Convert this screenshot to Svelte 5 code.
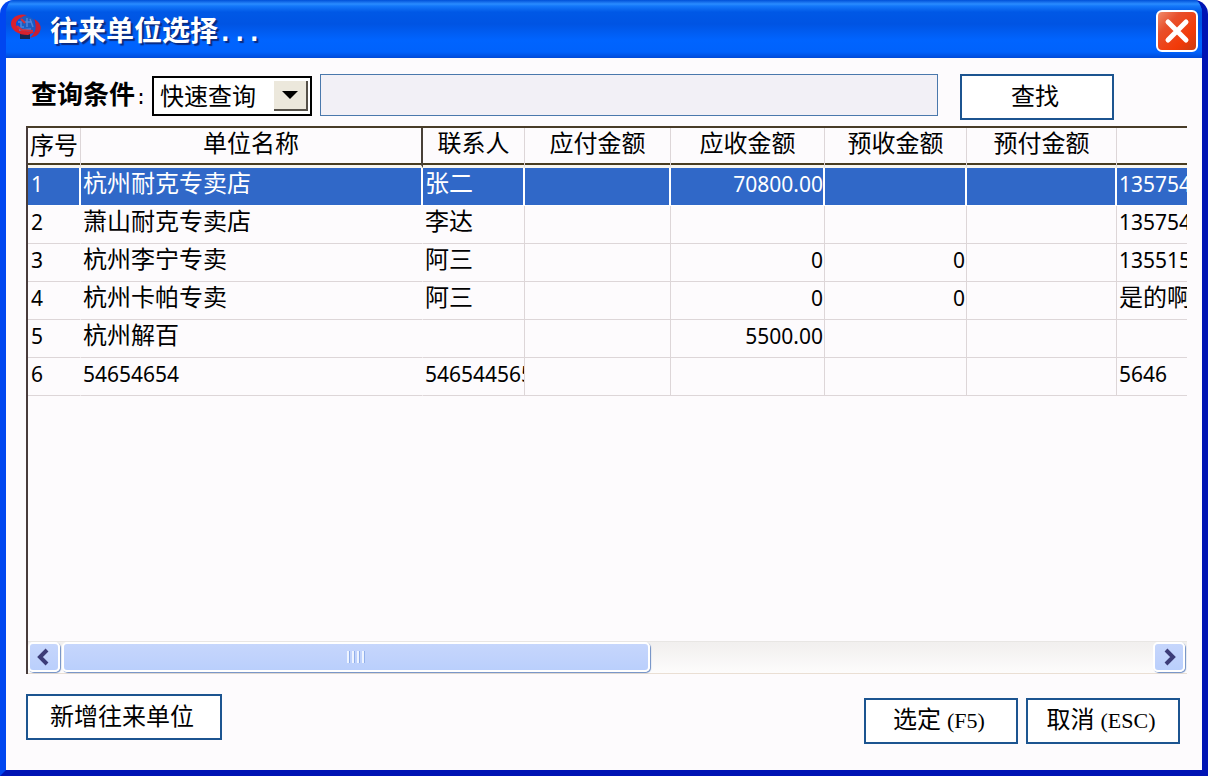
<script lang="ts">
  interface Unit {
    name: string;
    contact: string;
    payable: string;
    receivable: string;
    preReceived: string;
    prePaid: string;
    phone: string;
  }

  const units: Unit[] = [
    { name: '杭州耐克专卖店', contact: '张二', payable: '', receivable: '70800.00', preReceived: '', prePaid: '', phone: '135754' },
    { name: '萧山耐克专卖店', contact: '李达', payable: '', receivable: '', preReceived: '', prePaid: '', phone: '135754' },
    { name: '杭州李宁专卖', contact: '阿三', payable: '', receivable: '0', preReceived: '0', prePaid: '', phone: '135515' },
    { name: '杭州卡帕专卖', contact: '阿三', payable: '', receivable: '0', preReceived: '0', prePaid: '', phone: '是的啊' },
    { name: '杭州解百', contact: '', payable: '', receivable: '5500.00', preReceived: '', prePaid: '', phone: '' },
    { name: '54654654', contact: '546544565', payable: '', receivable: '', preReceived: '', prePaid: '', phone: '5646' }
  ];

  let selected = $state(0);
  let keyword = $state('');

  const isLatin = (text: string) => /^[\d.]+$/.test(text);
</script>

{#snippet cell(text: string, amount: boolean)}
  <td class:amount class:latin={isLatin(text)}>{text}</td>
{/snippet}

<div class="window">
  <header class="titlebar">
    <svg class="logo" width="32" height="28" viewBox="0 0 32 28" fill="none" aria-hidden="true">
      <path d="M10 20h10v6H10z" fill="#17264f" />
      <path d="M10 5c4-3 12-2 14 3l1 8c-3 4-10 4-14 1z" fill="#1c5cc0" />
      <path d="M17 2C9 0 1 4 1 11c0 6 7 11 17 11l7-3C14 19 6 16 6 11c0-4 5-7 11-9z" fill="#d9202c" />
      <path d="M24 6c8 4 9 12 2 17l-6 2c6-6 7-11 4-19z" fill="#c81e32" />
      <path d="M8 9h3v5h3M17 5v9M20 6l3 8M14 9h8M9 17l12-1" stroke="#4a84e0" stroke-width="1.5" />
      <path d="M7 13l5 4 11 1M11 6l4 4" stroke="#d2303c" stroke-width="2" />
    </svg>
    <h1>往来单位选择<span class="dots">...</span></h1>
    <button class="close" aria-label="关闭">
      <svg width="26" height="26" viewBox="0 0 26 26" fill="none">
        <path d="M4 4l18 18M22 4L4 22" stroke="#fff" stroke-width="5" stroke-linecap="round" />
      </svg>
    </button>
  </header>

  <main>
    <form class="query" onsubmit={(e) => e.preventDefault()}>
      <label for="mode">查询条件<span class="colon">:</span></label>
      <div class="select">
        <select id="mode">
          <option>快速查询</option>
        </select>
        <span class="arrow">
          <svg width="16" height="8" viewBox="0 0 16 8"><path d="M0 0h16L8 8z" fill="#000" /></svg>
        </span>
      </div>
      <input type="text" aria-label="查询内容" bind:value={keyword} />
      <button class="btn">查找</button>
    </form>

    <div class="grid">
      <div class="view">
        <table>
          <colgroup>
            <col class="c-no" />
            <col class="c-name" />
            <col class="c-contact" />
            <col class="c-payable" />
            <col class="c-receivable" />
            <col class="c-received" />
            <col class="c-paid" />
            <col />
          </colgroup>
          <thead>
            <tr>
              <th class="first">序号</th>
              <th class="name">单位名称</th>
              <th>联系人</th>
              <th>应付金额</th>
              <th>应收金额</th>
              <th>预收金额</th>
              <th>预付金额</th>
              <th></th>
            </tr>
          </thead>
          <tbody>
            {#each units as unit, i}
              <tr class:selected={i === selected} onclick={() => (selected = i)}>
                {@render cell(String(i + 1), false)}
                {@render cell(unit.name, false)}
                {@render cell(unit.contact, false)}
                {@render cell(unit.payable, true)}
                {@render cell(unit.receivable, true)}
                {@render cell(unit.preReceived, true)}
                {@render cell(unit.prePaid, true)}
                {@render cell(unit.phone, false)}
              </tr>
            {/each}
          </tbody>
        </table>
      </div>

      <div class="scrollbar">
        <button class="scroll-btn" aria-label="向左滚动">
          <svg width="14" height="18" viewBox="0 0 14 18" fill="none"><path d="M10 2L3 9l7 7" stroke="#3c3c78" stroke-width="4" /></svg>
        </button>
        <div class="track">
          <div class="thumb"><i></i><i></i><i></i><i></i></div>
        </div>
        <button class="scroll-btn" aria-label="向右滚动">
          <svg width="14" height="18" viewBox="0 0 14 18" fill="none"><path d="M4 2l7 7-7 7" stroke="#3c3c78" stroke-width="4" /></svg>
        </button>
      </div>
    </div>

    <footer>
      <button class="btn add">新增往来单位</button>
      <div class="actions">
        <button class="btn">选定<span class="key">(F5)</span></button>
        <button class="btn">取消<span class="key">(ESC)</span></button>
      </div>
    </footer>
  </main>
</div>

<style>
  :global(body) {
    margin: 0;
    background: #fff;
  }

  .window {
    box-sizing: border-box;
    min-height: 100vh;
    display: flex;
    flex-direction: column;
    border: solid;
    border-width: 0 6px 6px;
    border-color: #0014b4 #0014b4 #0014b4 #0046f0;
    border-radius: 14px 14px 0 0;
    background: #0058ee;
    color: #000;
    font-family: "Noto Sans CJK SC", sans-serif;
    font-size: 24px;
    line-height: 36px;
    overflow: hidden;
  }

  button,
  input,
  select {
    box-sizing: border-box;
    margin: 0;
    padding: 0;
    font: inherit;
    color: inherit;
  }

  .titlebar {
    box-sizing: border-box;
    height: 58px;
    display: flex;
    align-items: center;
    gap: 8px;
    padding: 4px 4px 0;
    background: linear-gradient(#0050d8 0, #2a8cff 4px, #1478fa 6px, #0058e6 12px, #0054e3 24px, #0064ff 40px, #0062fc 52px, #004ad8 58px);
  }

  .logo {
    margin-top: -8px;
  }

  h1 {
    flex: 1;
    margin: 0;
    color: #fff;
    font-size: 28px;
    font-weight: 700;
    line-height: 40px;
    text-shadow: 2px 2px 1px #0a2a80;
  }

  .dots {
    font-family: "DejaVu Sans Mono", monospace;
    font-size: 24px;
  }

  .close {
    width: 42px;
    height: 42px;
    display: flex;
    align-items: center;
    justify-content: center;
    border: 2px solid #fff;
    border-radius: 6px;
    background: linear-gradient(135deg, #f08c6c 0, #e8502c 30%, #f23a08 70%, #c83c14 100%);
  }

  main {
    flex: 1;
    display: flex;
    flex-direction: column;
    padding: 16px 15px 26px 20px;
    background: #fdfbfd;
  }

  .query {
    display: flex;
    align-items: flex-start;
    padding-right: 73px;
  }

  .query label {
    width: 121px;
    padding-left: 5px;
    font-size: 26px;
    font-weight: 700;
    line-height: 38px;
    white-space: nowrap;
  }

  .colon {
    font-family: "Liberation Mono", monospace;
    font-size: 20px;
    font-weight: 400;
  }

  .select {
    position: relative;
    width: 160px;
    height: 40px;
    margin: 2px 8px 0 0;
  }

  select {
    width: 100%;
    height: 100%;
    padding: 0 36px 2px 6px;
    border: 2px solid #000;
    border-radius: 0;
    background: #fff;
    line-height: 34px;
    appearance: none;
  }

  .arrow {
    position: absolute;
    top: 5px;
    right: 4px;
    bottom: 5px;
    width: 34px;
    box-sizing: border-box;
    display: flex;
    align-items: center;
    justify-content: center;
    border-right: 2px solid #555048;
    border-bottom: 2px solid #555048;
    background: #ece8dc;
    pointer-events: none;
  }

  input {
    flex: 1;
    min-width: 0;
    height: 42px;
    margin-right: 22px;
    padding: 0 6px;
    border: 1px solid #4a78ac;
    border-radius: 0;
    background: #f2f0f6;
  }

  .btn {
    width: 154px;
    height: 46px;
    padding: 0 4px 4px 0;
    border: 2px solid #1c5490;
    border-radius: 0;
    background: #fff;
    white-space: nowrap;
  }

  .grid {
    flex: 1;
    display: flex;
    flex-direction: column;
    margin-top: 6px;
    border-top: 2px solid #483c28;
    border-left: 2px solid #483c3c;
  }

  .view {
    flex: 1;
  }

  table {
    width: 100%;
    table-layout: fixed;
    border-collapse: separate;
    border-spacing: 0;
  }

  .c-no { width: 53px; }
  .c-name { width: 342px; }
  .c-contact { width: 102px; }
  .c-payable { width: 146px; }
  .c-receivable { width: 154px; }
  .c-received { width: 142px; }
  .c-paid { width: 150px; }

  th,
  td {
    box-sizing: border-box;
    white-space: nowrap;
    border-right: 1px solid #ddd6d8;
  }

  th:last-child,
  td:last-child {
    border-right: 0;
  }

  th {
    height: 40px;
    padding: 0 0 9px;
    border-bottom: 3px solid #f8f6f0;
    box-shadow: inset 0 -2px #483c20;
    font-weight: 400;
    line-height: 28px;
  }

  th.first {
    padding: 2px 0 7px 2px;
    text-align: left;
  }

  th.name {
    border-right: 2px solid #484038;
  }

  td {
    height: 38px;
    padding: 0 2px 9px;
    border-bottom: 1px solid #ddd6d8;
    line-height: 28px;
  }

  td:nth-child(1) {
    padding-left: 3px;
  }

  td:nth-child(1),
  td:nth-child(2) {
    border-right-color: transparent;
  }

  td.latin {
    padding-top: 2px;
    padding-bottom: 7px;
    font-family: "Noto Sans", sans-serif;
    font-size: 21px;
  }

  td.latin,
  td:last-child {
    overflow: hidden;
  }

  td.amount {
    padding-right: 1px;
    text-align: right;
  }

  .selected td {
    border-right: 2px solid #fff;
    border-bottom-color: #fff;
    background: #3068c8;
    background-clip: padding-box;
    color: #fff;
  }

  .selected td.amount {
    padding-right: 0;
  }

  .selected td:last-child {
    border-right: 0;
  }

  .scrollbar {
    height: 33px;
    box-sizing: border-box;
    display: flex;
    gap: 2px;
    padding: 0 2px 1px 0;
    border-top: 1px solid #e8e6e4;
    border-bottom: 1px solid #eadfd4;
    background: linear-gradient(#f1efee, #fdfcfc);
  }

  .scroll-btn,
  .thumb {
    box-sizing: border-box;
    border: 2px solid #fff;
    border-radius: 5px;
    box-shadow: 1px 1px 1px #6c8cc4;
    background: linear-gradient(#c6d6fc, #bacffc);
  }

  .scroll-btn {
    width: 32px;
    display: flex;
    align-items: center;
    justify-content: center;
  }

  .track {
    flex: 1;
    display: flex;
  }

  .thumb {
    width: 54%;
    display: flex;
    align-items: center;
    justify-content: center;
    gap: 2px;
  }

  .thumb i {
    width: 2px;
    height: 12px;
    border-right: 1px solid #92b0ea;
    background: #eef4ff;
  }

  footer {
    display: flex;
    justify-content: space-between;
    align-items: flex-start;
    margin-top: 20px;
    padding-right: 7px;
  }

  .btn.add {
    width: 196px;
  }

  .actions {
    display: flex;
    gap: 8px;
    padding-top: 4px;
  }

  .key {
    margin-left: 6px;
    font-family: "Liberation Serif", serif;
    font-size: 22px;
  }
</style>
